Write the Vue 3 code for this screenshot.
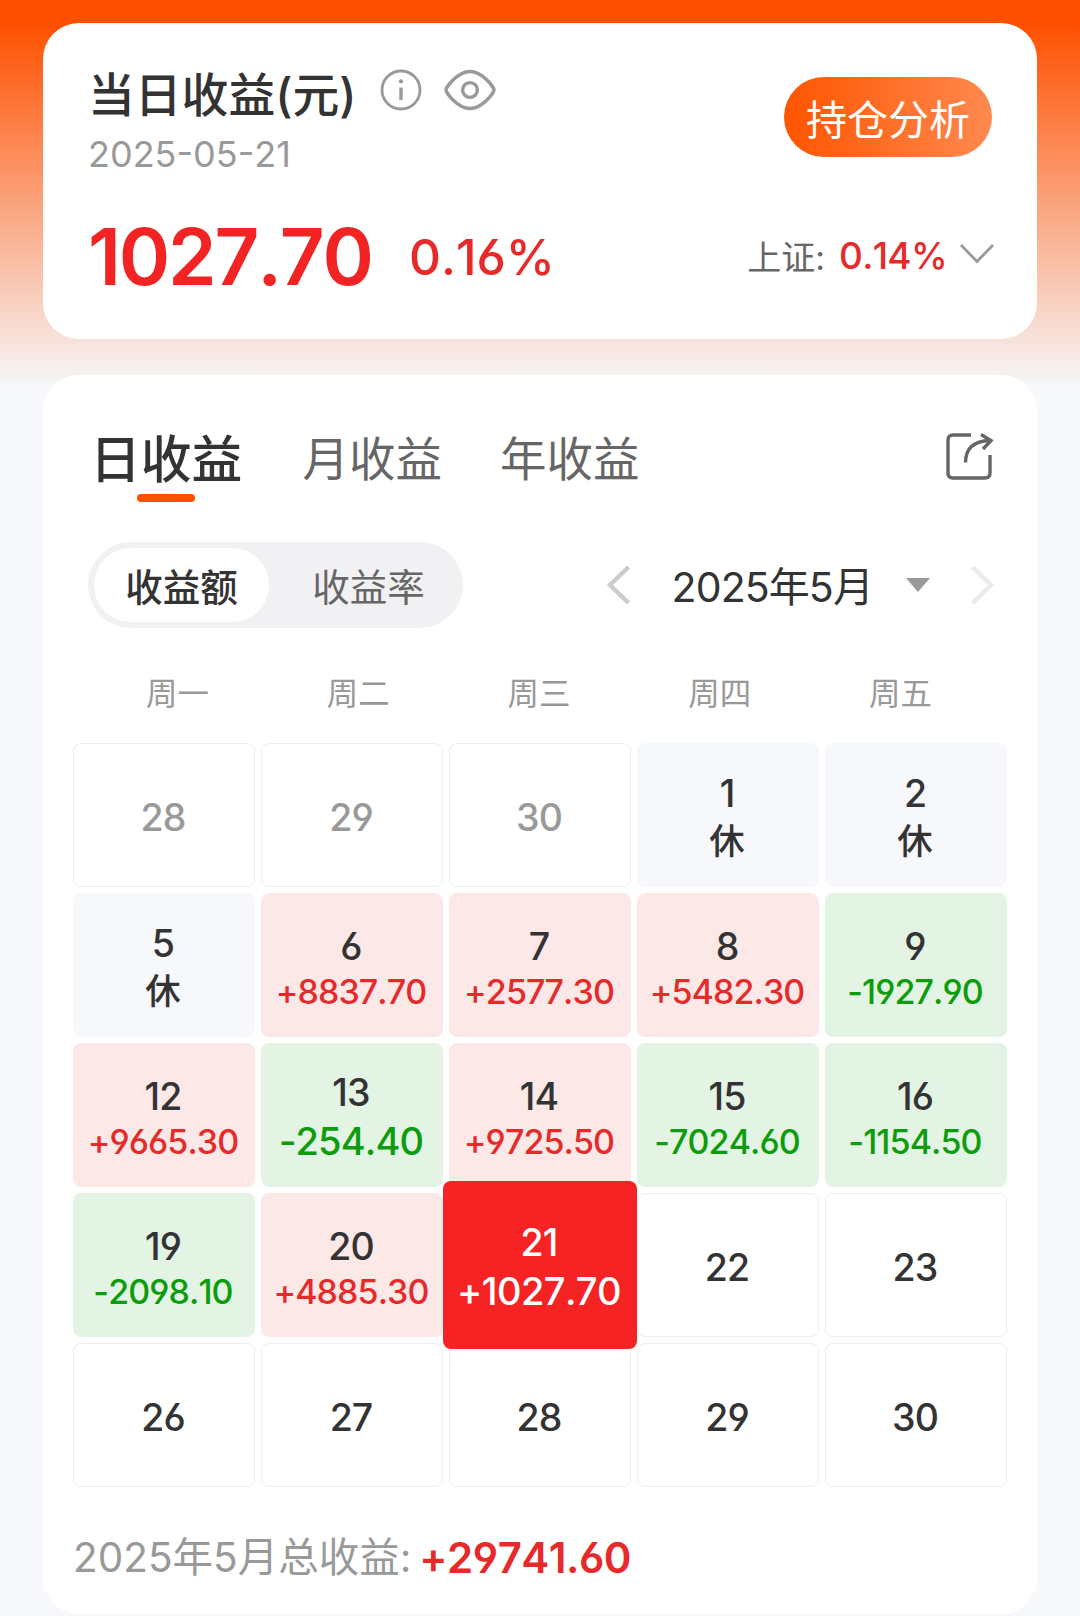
<script setup>
import { ref, computed } from 'vue';

const tabs = ['日收益', '月收益', '年收益'];
const activeTab = ref(0);

const modes = ['收益额', '收益率'];
const activeMode = ref(0);

const year = ref(2025);
const month = ref(5);
const monthLabel = computed(() => `${year.value}年${month.value}月`);

const weekdays = ['周一', '周二', '周三', '周四', '周五'];
const selectedDay = ref('5-21');

const days = [
  { id: '4-28', day: 28, outMonth: true },
  { id: '4-29', day: 29, outMonth: true },
  { id: '4-30', day: 30, outMonth: true },
  { id: '5-1', day: 1, rest: true },
  { id: '5-2', day: 2, rest: true },
  { id: '5-5', day: 5, rest: true },
  { id: '5-6', day: 6, profit: 8837.7 },
  { id: '5-7', day: 7, profit: 2577.3 },
  { id: '5-8', day: 8, profit: 5482.3 },
  { id: '5-9', day: 9, profit: -1927.9 },
  { id: '5-12', day: 12, profit: 9665.3 },
  { id: '5-13', day: 13, profit: -254.4 },
  { id: '5-14', day: 14, profit: 9725.5 },
  { id: '5-15', day: 15, profit: -7024.6 },
  { id: '5-16', day: 16, profit: -1154.5 },
  { id: '5-19', day: 19, profit: -2098.1 },
  { id: '5-20', day: 20, profit: 4885.3 },
  { id: '5-21', day: 21, profit: 1027.7 },
  { id: '5-22', day: 22 },
  { id: '5-23', day: 23 },
  { id: '5-26', day: 26 },
  { id: '5-27', day: 27 },
  { id: '5-28', day: 28 },
  { id: '5-29', day: 29 },
  { id: '5-30', day: 30 },
];

const total = computed(() =>
  days.reduce((sum, item) => sum + (item.profit || 0), 0)
);

function formatProfit(value) {
  return (value > 0 ? '+' : '') + value.toFixed(2);
}

function cellClass(item) {
  return {
    outMonth: item.outMonth,
    rest: item.rest,
    up: item.profit > 0,
    down: item.profit < 0,
    large: item.profit && formatProfit(item.profit).length < 8,
    selected: item.id === selectedDay.value,
  };
}

function selectDay(item) {
  if (item.profit) {
    selectedDay.value = item.id;
  }
}
</script>
<template>
  <div class="page">
    <section class="card summary">
      <div class="summary-head">
        <div>
          <div class="title-row">
            <h1 class="title">当日收益(元)</h1>
            <svg class="icon-info" width="42" height="42" viewBox="0 0 42 42">
              <circle cx="21" cy="21" r="19" />
              <circle class="dot" cx="21" cy="12.4" r="2.1" />
              <path d="M21 18.5V31" />
            </svg>
            <svg class="icon-eye" width="52" height="42" viewBox="0 0 52 42">
              <path
                d="M2 21C2 18.5 13.5 2.5 26 2.5S50 18.5 50 21S38.5 39.5 26 39.5S2 23.5 2 21Z"
              />
              <circle cx="26" cy="21" r="7.4" />
            </svg>
          </div>
          <div class="date">2025-05-21</div>
        </div>
        <button class="analysis">持仓分析</button>
      </div>
      <div class="summary-values">
        <span class="amount">1027.70</span>
        <span class="percent">0.16%</span>
        <div class="index">
          <span class="index-name">上证:</span>
          <span class="index-value">0.14%</span>
          <svg class="icon-down" width="36" height="22" viewBox="0 0 36 22">
            <path d="M2 2L18 18.5L34 2" />
          </svg>
        </div>
      </div>
    </section>

    <section class="card detail">
      <div class="tabs">
        <div
          v-for="(tab, index) in tabs"
          :key="tab"
          class="tab"
          :class="{ active: index === activeTab }"
          @click="activeTab = index"
        >
          {{ tab }}
        </div>
        <svg class="icon-share" width="50" height="50" viewBox="0 0 50 50">
          <path
            d="M26 4H8Q3 4 3 9V42Q3 47 8 47H40Q45 47 45 42V24"
          />
          <path d="M20.5 31.5C20.5 17 29 10 45 9.5" />
          <path d="M36 3.5L46 9.5L38 18" />
        </svg>
      </div>

      <div class="toolbar">
        <div class="modes">
          <div
            v-for="(mode, index) in modes"
            :key="mode"
            class="mode"
            :class="{ active: index === activeMode }"
            @click="activeMode = index"
          >
            {{ mode }}
          </div>
        </div>
        <div class="month-nav">
          <svg class="arrow prev" width="25" height="40" viewBox="0 0 25 40">
            <path d="M22.5 2L4 20L22.5 38" />
          </svg>
          <span class="month">{{ monthLabel }}</span>
          <svg class="caret" width="24" height="14" viewBox="0 0 24 14">
            <path d="M0 0H24L12 14Z" />
          </svg>
          <svg class="arrow next" width="25" height="40" viewBox="0 0 25 40">
            <path d="M2.5 2L21 20L2.5 38" />
          </svg>
        </div>
      </div>

      <div class="weekdays">
        <div v-for="name in weekdays" :key="name">{{ name }}</div>
      </div>
      <div class="days">
        <div
          v-for="item in days"
          :key="item.id"
          class="day"
          :class="cellClass(item)"
          @click="selectDay(item)"
        >
          <span class="num">{{ item.day }}</span>
          <span v-if="item.rest" class="note">休</span>
          <span v-if="item.profit" class="profit">
            {{ formatProfit(item.profit) }}
          </span>
        </div>
      </div>

      <div class="total">
        <span class="total-name">{{ monthLabel }}总收益:</span>
        <span class="total-value">{{ formatProfit(total) }}</span>
      </div>
    </section>
  </div>
</template>
<style>
body {
  margin: 0;
  background-color: #f6f8fb;
}
</style>
<style scoped>
.page {
  box-sizing: border-box;
  width: 1080px;
  height: 1616px;
  padding: 23px 43px 0;
  background: linear-gradient(
      180deg,
      #ff5000 0,
      #ff5000 24px,
      #f6f8fb 388px
    )
    #f6f8fb;
  font-family: Inter, 'Noto Sans CJK SC', sans-serif;
  font-feature-settings: 'cv03', 'cv04';
  font-kerning: none;
  color: #333333;
  overflow: hidden;
}
.card {
  box-sizing: border-box;
  background-color: #ffffff;
  border-radius: 36px;
}
svg {
  display: block;
  flex: none;
  fill: none;
}

/* summary */
.summary {
  height: 316px;
  padding: 39px 45px 0 45px;
}
.summary-head {
  display: flex;
  justify-content: space-between;
  align-items: flex-start;
}
.title-row {
  display: flex;
  align-items: center;
  height: 60px;
}
.title {
  margin: 0;
  padding-top: 5px;
  font-size: 46.8px;
  line-height: 60px;
  font-weight: 500;
}
.icon-info {
  margin: -4px 0 0 23px;
  stroke: #999999;
  stroke-width: 2.8;
}
.icon-info path {
  stroke-width: 3.4;
}
.icon-info .dot {
  fill: #999999;
  stroke: none;
}
.icon-eye {
  margin: -4px 0 0 22px;
  stroke: #999999;
  stroke-width: 3.4;
}
.date {
  margin-top: 12px;
  font-size: 36px;
  line-height: 40px;
  color: #999999;
}
.analysis {
  width: 208px;
  height: 80px;
  margin-top: 15px;
  padding: 6px 0 0;
  border: none;
  border-radius: 40px;
  background: linear-gradient(90deg, #ff5500, #ff894f);
  color: #ffffff;
  font-family: inherit;
  font-size: 41px;
  line-height: 74px;
  cursor: pointer;
}
.summary-values {
  display: flex;
  align-items: center;
  height: 80px;
  margin-top: 43px;
}
.amount {
  width: 286px;
  font-size: 78px;
  line-height: 80px;
  font-weight: 600;
  letter-spacing: -2.2px;
  color: #f22323;
}
.percent {
  margin-left: 35px;
  font-size: 49.5px;
  font-weight: 500;
  color: #e62a2a;
}
.index {
  display: flex;
  align-items: center;
  margin: -4px -3px 0 auto;
}
.index-name {
  font-size: 34px;
  color: #666666;
}
.index-value {
  margin-left: 14px;
  font-size: 37px;
  font-weight: 500;
  letter-spacing: -0.7px;
  color: #e62a2a;
}
.icon-down {
  margin: -2px 0 0 12px;
  stroke: #999999;
  stroke-width: 2.8;
}

/* detail */
.detail {
  height: 1239px;
  margin-top: 36px;
  padding: 52px 30px 0;
}
.tabs {
  display: flex;
  align-items: center;
  height: 60px;
  padding: 0 12px 0 17px;
}
.tab {
  position: relative;
  margin-right: 58px;
  padding-top: 4px;
  font-size: 46.5px;
  line-height: 60px;
  color: #666666;
  cursor: pointer;
}
.tab.active {
  margin-right: 60px;
  padding-top: 5px;
  font-size: 50.8px;
  font-weight: 500;
  color: #333333;
}
.tab.active::after {
  content: '';
  position: absolute;
  left: 50%;
  top: 69px;
  width: 58px;
  height: 8px;
  margin-left: -29px;
  border-radius: 4px;
  background-color: #ff5000;
}
.icon-share {
  margin: -2px 0 0 auto;
  stroke: #666666;
  stroke-width: 3.4;
}
.toolbar {
  display: flex;
  align-items: center;
  justify-content: space-between;
  margin-top: 55px;
  padding: 0 12px 0 15px;
}
.modes {
  box-sizing: border-box;
  display: flex;
  width: 375px;
  height: 86px;
  padding: 6px;
  border-radius: 43px;
  background-color: #f1f1f4;
}
.mode {
  box-sizing: border-box;
  width: 175px;
  height: 74px;
  margin-right: 12px;
  padding-top: 1px;
  border-radius: 37px;
  text-align: center;
  font-size: 37.5px;
  line-height: 77px;
  color: #666666;
  cursor: pointer;
}
.mode + .mode {
  margin-right: 0;
}
.mode.active {
  background-color: #ffffff;
  font-weight: 500;
  color: #333333;
}
.month-nav {
  display: flex;
  align-items: center;
}
.arrow {
  stroke-width: 4.5;
}
.prev {
  stroke: #cccccc;
}
.next {
  margin-left: 40px;
  stroke: #ebebeb;
}
.month {
  margin-left: 41px;
  padding-top: 3px;
  font-size: 41px;
  line-height: 60px;
  letter-spacing: -0.9px;
}
.caret {
  margin: -1px 0 0 33px;
  fill: #999999;
}
.weekdays {
  display: grid;
  grid-template-columns: repeat(5, 1fr);
  margin-top: 46px;
  padding: 0 16px 0 14px;
  text-align: center;
  font-size: 31.5px;
  line-height: 40px;
  color: #999999;
}
.days {
  display: grid;
  grid-template-columns: repeat(5, 182px);
  grid-auto-rows: 144px;
  gap: 6px;
  margin-top: 29px;
}
.day {
  box-sizing: border-box;
  display: flex;
  flex-direction: column;
  align-items: center;
  justify-content: center;
  padding: 3px 2px 0 0;
  border: 1px solid #eeeeee;
  border-radius: 8px;
  font-weight: 500;
}
.num {
  padding-top: 3px;
  font-size: 37.5px;
  line-height: 46px;
  letter-spacing: -0.9px;
}
.outMonth {
  color: #999999;
}
.rest,
.up,
.down {
  padding-top: 4px;
  border: none;
}
.rest {
  background-color: #f6f8fb;
}
.note {
  font-size: 35.5px;
  line-height: 47px;
}
.rest .num,
.large .num,
.selected .num {
  padding-top: 0;
  line-height: 48px;
}
.up {
  background-color: #fde8e8;
}
.down {
  background-color: #e3f4e4;
}
.profit {
  font-size: 34px;
  line-height: 44px;
  letter-spacing: -0.9px;
  white-space: nowrap;
}
.up .profit {
  color: #e62a2a;
}
.down .profit {
  color: #0c9c0c;
}
.large .profit,
.selected .profit {
  font-size: 38px;
  line-height: 48px;
}
.selected {
  z-index: 1;
  margin: -12px -6px;
  background-color: #f52323;
  color: #ffffff;
}
.selected .profit {
  letter-spacing: -0.6px;
  color: #ffffff;
}
.total {
  display: flex;
  align-items: center;
  margin-top: 41px;
  line-height: 60px;
}
.total-name {
  font-size: 40.5px;
  color: #999999;
}
.total-value {
  margin-left: 8px;
  font-size: 42px;
  font-weight: 600;
  letter-spacing: -0.5px;
  color: #e62a2a;
}
</style>
